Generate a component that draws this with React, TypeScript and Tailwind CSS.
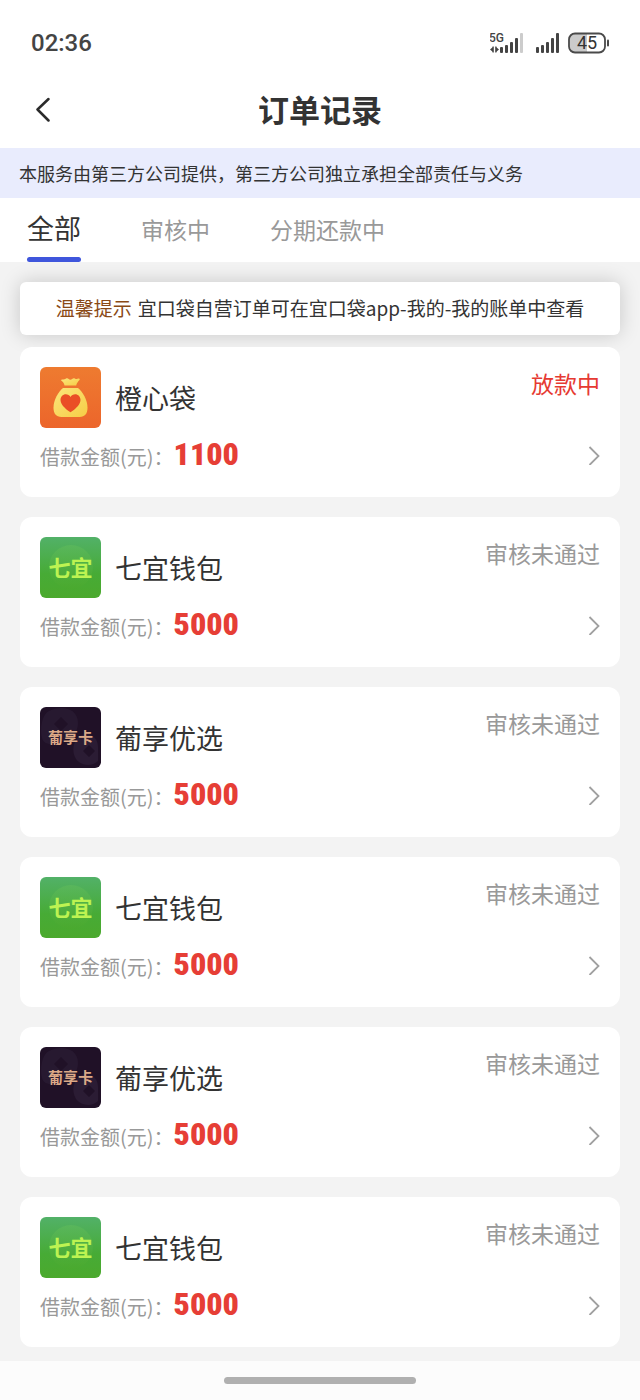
import { useState } from "react";

type Brand = "orange" | "green" | "dark";

type Order = {
  id: number;
  brand: Brand;
  name: string;
  amount: number;
  status: string;
  active?: boolean;
};

const tabs = ["全部", "审核中", "分期还款中"];

const orders: Order[] = [
  { id: 1, brand: "orange", name: "橙心袋", amount: 1100, status: "放款中", active: true },
  { id: 2, brand: "green", name: "七宜钱包", amount: 5000, status: "审核未通过" },
  { id: 3, brand: "dark", name: "葡享优选", amount: 5000, status: "审核未通过" },
  { id: 4, brand: "green", name: "七宜钱包", amount: 5000, status: "审核未通过" },
  { id: 5, brand: "dark", name: "葡享优选", amount: 5000, status: "审核未通过" },
  { id: 6, brand: "green", name: "七宜钱包", amount: 5000, status: "审核未通过" },
];

const StatusBar = () => (
  <div className="flex h-[86px] items-center justify-between pl-[31px] pr-[30px] text-[#444444]">
    <time className="font-['Roboto',sans-serif] text-2xl font-medium">02:36</time>

    <div className="flex items-center gap-3">
      {/* 5G signal */}
      <svg width="34" height="22" viewBox="0 0 34 22" fill="#444444" aria-hidden="true">
        <text x="-1" y="10" fontSize="12" fontWeight="500" fontFamily="Roboto, sans-serif">
          5G
        </text>
        <path d="M0 17.500l3-2.500v5zM9 17.500l-3-2.500v5z" />
        <rect x="2.500" y="14.500" width="1.300" height="6" />
        <rect x="5.200" y="14.500" width="1.300" height="6" />
        <rect x="10" y="15" width="3" height="6" rx="1" />
        <rect x="15" y="13" width="3" height="8" rx="1" />
        <rect x="20" y="10" width="3" height="11" rx="1" />
        <rect x="25" y="6" width="3" height="15" rx="1" />
        <rect x="30" y="1" width="3" height="20" rx="1" fill="#cccccc" />
      </svg>

      <svg width="24" height="22" viewBox="0 0 24 22" fill="#444444" aria-hidden="true">
        <rect x="0" y="15" width="3" height="6" rx="1" />
        <rect x="5" y="13" width="3" height="8" rx="1" />
        <rect x="10" y="10" width="3" height="11" rx="1" />
        <rect x="15" y="6" width="3" height="15" rx="1" />
        <rect x="20" y="1" width="3" height="20" rx="1" />
      </svg>

      {/* Battery */}
      <svg className="-ml-1" width="42" height="22" viewBox="0 0 42 22" aria-hidden="true">
        <path d="M7 1.500h12v19H7a5.500 5.500 0 0 1-5.500-5.500V7A5.500 5.500 0 0 1 7 1.500z" fill="#cbcbcb" />
        <rect x="1" y="1.500" width="36" height="19" rx="6" fill="none" stroke="#4a4a4a" strokeWidth="1.800" />
        <rect x="39" y="7.500" width="2" height="7" rx="1" fill="#4a4a4a" />
        <text
          x="19"
          y="17"
          textAnchor="middle"
          fontSize="18"
          fontWeight="400"
          fontFamily="Roboto, sans-serif"
          fill="#333333"
        >
          45
        </text>
      </svg>
    </div>
  </div>
);

const BrandLogo = ({ brand }: { brand: Brand }) => {
  if (brand === "orange") {
    return (
      <svg className="size-[61px] shrink-0 rounded-md" viewBox="0 0 61 61" aria-hidden="true">
        <defs>
          <linearGradient id="orange-bg" x1="0" y1="0" x2="0" y2="1">
            <stop offset="0" stopColor="#ee7b30" />
            <stop offset="1" stopColor="#ec652b" />
          </linearGradient>
          <linearGradient id="orange-bag" x1="0" y1="0" x2="1" y2="1">
            <stop offset="0" stopColor="#fbe57c" />
            <stop offset="1" stopColor="#f6cd45" />
          </linearGradient>
        </defs>
        <rect width="61" height="61" fill="url(#orange-bg)" />
        <path
          d="M24.500 18.500c-.4-2.200-1.300-3.500-3-4.700-.7-.6-.3-1.500.6-1.400 1.400.2 2.500.1 3.600-.6 1.200-.7 2.200-.5 3 .3.900.9 2.500.9 3.400 0 .9-.8 1.900-1 3-.4 1.200.7 2.200.4 3.500-.1.900-.3 1.500.6.9 1.300-1.700 1.800-2.900 3.400-3.300 5.600z"
          fill="url(#orange-bag)"
        />
        <path
          d="M23 21h15c4.500 3.500 9.500 12 9.500 19.500 0 6-2.500 9.500-8 9.500h-18c-5.500 0-8-3.500-8-9.500C13.500 33 18.500 24.500 23 21z"
          fill="url(#orange-bag)"
        />
        <path
          d="M30.500 45.300c-2.500-1.600-10-6.800-10-12.300 0-3.400 2.400-5.700 5.300-5.700 2 0 3.700 1 4.700 2.700 1-1.700 2.700-2.700 4.700-2.700 2.900 0 5.300 2.300 5.300 5.700 0 5.500-7.500 10.700-10 12.300z"
          fill="#ea4e26"
        />
      </svg>
    );
  }

  if (brand === "green") {
    return (
      <svg className="size-[61px] shrink-0 rounded-md" viewBox="0 0 61 61" aria-hidden="true">
        <defs>
          <linearGradient id="green-bg" x1="0" y1="0" x2="0" y2="1">
            <stop offset="0" stopColor="#52b168" />
            <stop offset="0.600" stopColor="#47ab36" />
            <stop offset="1" stopColor="#4ba92d" />
          </linearGradient>
          <linearGradient id="green-disc" x1="0" y1="0" x2="0" y2="1">
            <stop offset="0" stopColor="#62bd5c" />
            <stop offset="1" stopColor="#4ba92d" />
          </linearGradient>
        </defs>
        <rect width="61" height="61" fill="url(#green-bg)" />
        <circle cx="31" cy="30" r="22" fill="url(#green-disc)" opacity="0.500" />
        <text
          x="30.500"
          y="39"
          textAnchor="middle"
          fontSize="22"
          fontWeight="700"
          fontFamily="'Noto Sans CJK SC', sans-serif"
          fill="#bdf352"
        >
          七宜
        </text>
      </svg>
    );
  }

  return (
    <svg className="size-[61px] shrink-0 rounded-md" viewBox="0 0 61 61" aria-hidden="true">
      <rect width="61" height="61" fill="#201127" />
      <g fill="#2b1c34">
        <path d="M9 4c12-6 29-3 29 12 0 10-6 12-12 16-8 6-22 8-24-1C0 24 1 8 9 4z" opacity="0.700" />
        <path d="M42 28c8-3 16 2 16 12v14c-6 6-17 5-22-2-5-8-3-20 6-24z" />
      </g>
      <path d="M21 10l7 7-7 7-7-7zM49 38l6 6-6 6-6-6z" fill="#201127" />
      <text
        x="30.500"
        y="36"
        textAnchor="middle"
        fontSize="15"
        fontWeight="700"
        fontFamily="'Noto Sans CJK SC', sans-serif"
        fill="#dca987"
      >
        葡享卡
      </text>
    </svg>
  );
};

const OrderCard = ({ order }: { order: Order }) => (
  <li>
    <a href={`#order-${order.id}`} className="block rounded-xl bg-white px-5 pt-5 pb-6">
      <div className="flex items-start justify-between">
        <div className="flex items-center gap-3.5">
          <BrandLogo brand={order.brand} />
          <h2 className="text-[27px] leading-9 text-[#333333]">{order.name}</h2>
        </div>
        <span
          className={
            order.active
              ? "text-[23px] leading-8 text-[#e63a32]"
              : "text-[23px] leading-8 text-[#999999]"
          }
        >
          {order.status}
        </span>
      </div>

      <div className="mt-[9px] flex h-9 items-center justify-between">
        <p className="flex items-baseline text-xl leading-9 text-[#999999]">
          借款金额(元)：
          <strong className="font-['Liberation_Sans_Narrow','Roboto_Condensed','Roboto',sans-serif] text-[32px] leading-9 font-black text-[#e63e36]">
            {order.amount}
          </strong>
        </p>
        <svg width="12" height="20" viewBox="0 0 12 20" fill="none" stroke="#a0a0a0" strokeWidth="1.800" aria-hidden="true">
          <path d="M1.500 2L10.500 11L1.500 20" />
        </svg>
      </div>
    </a>
  </li>
);

const App = () => {
  const [activeTab, setActiveTab] = useState("全部");

  return (
    <div className="flex min-h-screen flex-col bg-[#f3f3f3] font-['Noto_Sans_CJK_SC',sans-serif] text-[#333333]">
      <div className="relative bg-white">
        <StatusBar />

        {/* Title */}
        <header className="grid h-[62px] grid-cols-[1fr_auto_1fr] items-center px-7 pb-4">
          <button type="button" aria-label="返回" className="flex size-8 items-center justify-center">
            <svg width="16" height="26" viewBox="0 0 16 26" fill="none" stroke="#2b2b2b" strokeWidth="2.500" strokeLinecap="round" strokeLinejoin="round">
              <path d="M12.500 3L1.500 13.500L12.500 24.500" />
            </svg>
          </button>
          <h1 className="text-[31px] leading-10 font-bold">订单记录</h1>
        </header>

        <p className="bg-[#e9ecfd] px-[19px] py-3 text-lg leading-[26px]">
          本服务由第三方公司提供，第三方公司独立承担全部责任与义务
        </p>

        <nav className="flex h-16 gap-15 px-[27px]">
          {tabs.map((tab) => (
            <button
              key={tab}
              type="button"
              onClick={() => setActiveTab(tab)}
              className={
                tab === activeTab
                  ? "flex flex-col justify-between pt-3 text-[27px] leading-9"
                  : "pb-0.5 text-[23px] leading-9 text-[#999999]"
              }
            >
              {tab}
              {tab === activeTab && <span className="h-[5px] w-full rounded-full bg-[#3f56dc]" />}
            </button>
          ))}
        </nav>
      </div>

      <main className="flex-1 px-5 pt-5 pb-3.5">
        <p className="mb-3 flex items-center justify-center gap-1.5 rounded-md bg-white pt-[11px] pb-[13px] text-[19px] leading-[29px] shadow-[0_0_20px_rgba(0,0,0,0.18)]">
          <span className="text-[#8a4a16]">温馨提示</span>
          宜口袋自营订单可在宜口袋app-我的-我的账单中查看
        </p>

        <ul className="relative flex flex-col gap-5">
          {orders.map((order) => (
            <OrderCard key={order.id} order={order} />
          ))}
        </ul>
      </main>

      <footer className="flex h-[39px] items-center justify-center bg-[#fcfcfc]">
        <div className="h-[7px] w-48 rounded-full bg-[#b0b0b0]" />
      </footer>
    </div>
  );
};

export default App;
